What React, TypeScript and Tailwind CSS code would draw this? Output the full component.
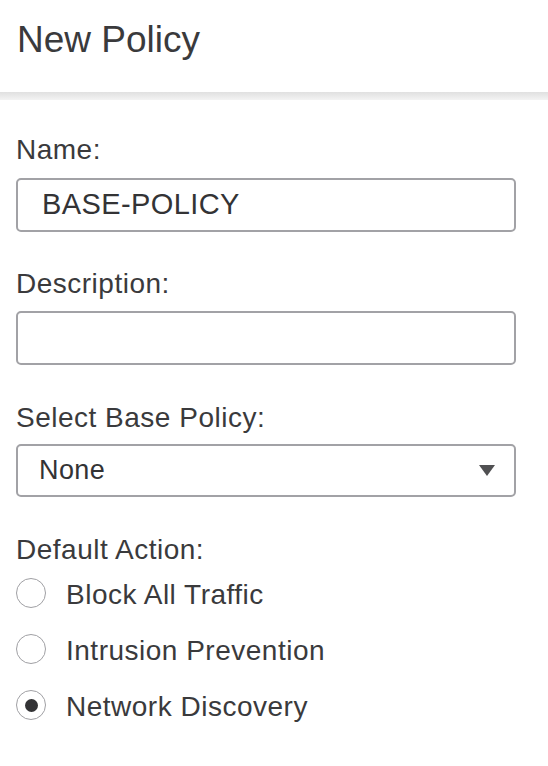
import React from "react";

function Label({ children }: { children: React.ReactNode }) {
  return <div className="text-[28px] leading-[28px] tracking-[0.5px] text-[#3a3a3c]">{children}</div>;
}

function Radio({ label, checked }: { label: string; checked?: boolean }) {
  return (
    <div className="flex h-[56px] items-center">
      <div className="flex h-[30px] w-[30px] items-center justify-center rounded-full border-[1.5px] border-[#a0a0a4] bg-white">
        {checked && <div className="h-[13px] w-[13px] rounded-full bg-[#333335]" />}
      </div>
      <span className="ml-[20px] mt-[4px] text-[28px] leading-[28px] tracking-[0.5px] text-[#3a3a3c]">{label}</span>
    </div>
  );
}

export default function App() {
  return (
    <div
      className="min-h-[766px] w-[548px] bg-white"
      style={{ fontFamily: "'Liberation Sans', Arial, sans-serif" }}
    >
      <div className="h-[92px] bg-white pl-[17px] pt-[21px]">
        <h1 className="text-[37px] leading-[37px] font-normal text-[#3a3a3c]">New Policy</h1>
      </div>
      <div className="h-[8px] bg-gradient-to-b from-[#e0e0e0] to-[#f3f3f3]" />
      <div className="flex flex-col pl-[16px] pt-[36px]">
        <Label>Name:</Label>
        <div className="mt-[14px] flex h-[54px] w-[500px] items-center rounded-[5px] border-2 border-[#a2a2a6] pl-[24px] text-[29px] tracking-[0.4px] text-[#333335]">
          BASE-POLICY
        </div>

        <div className="mt-[38px]">
          <Label>Description:</Label>
        </div>
        <div className="mt-[13px] h-[54px] w-[500px] rounded-[5px] border-2 border-[#a2a2a6]" />

        <div className="mt-[39px]">
          <Label>Select Base Policy:</Label>
        </div>
        <div className="mt-[12px] flex h-[53px] w-[500px] items-center justify-between rounded-[5px] border-2 border-[#a2a2a6] pl-[21px] pr-[19px] text-[27px] tracking-[0.4px] text-[#333335]">
          <span>None</span>
          <svg width="16" height="11" viewBox="0 0 16 11">
            <polygon points="0,0 16,0 8,11" fill="#505052" />
          </svg>
        </div>

        <div className="mt-[39px]">
          <Label>Default Action:</Label>
        </div>
        <div className="mt-[1px] flex flex-col">
          <Radio label="Block All Traffic" />
          <Radio label="Intrusion Prevention" />
          <Radio label="Network Discovery" checked />
        </div>
      </div>
    </div>
  );
}
